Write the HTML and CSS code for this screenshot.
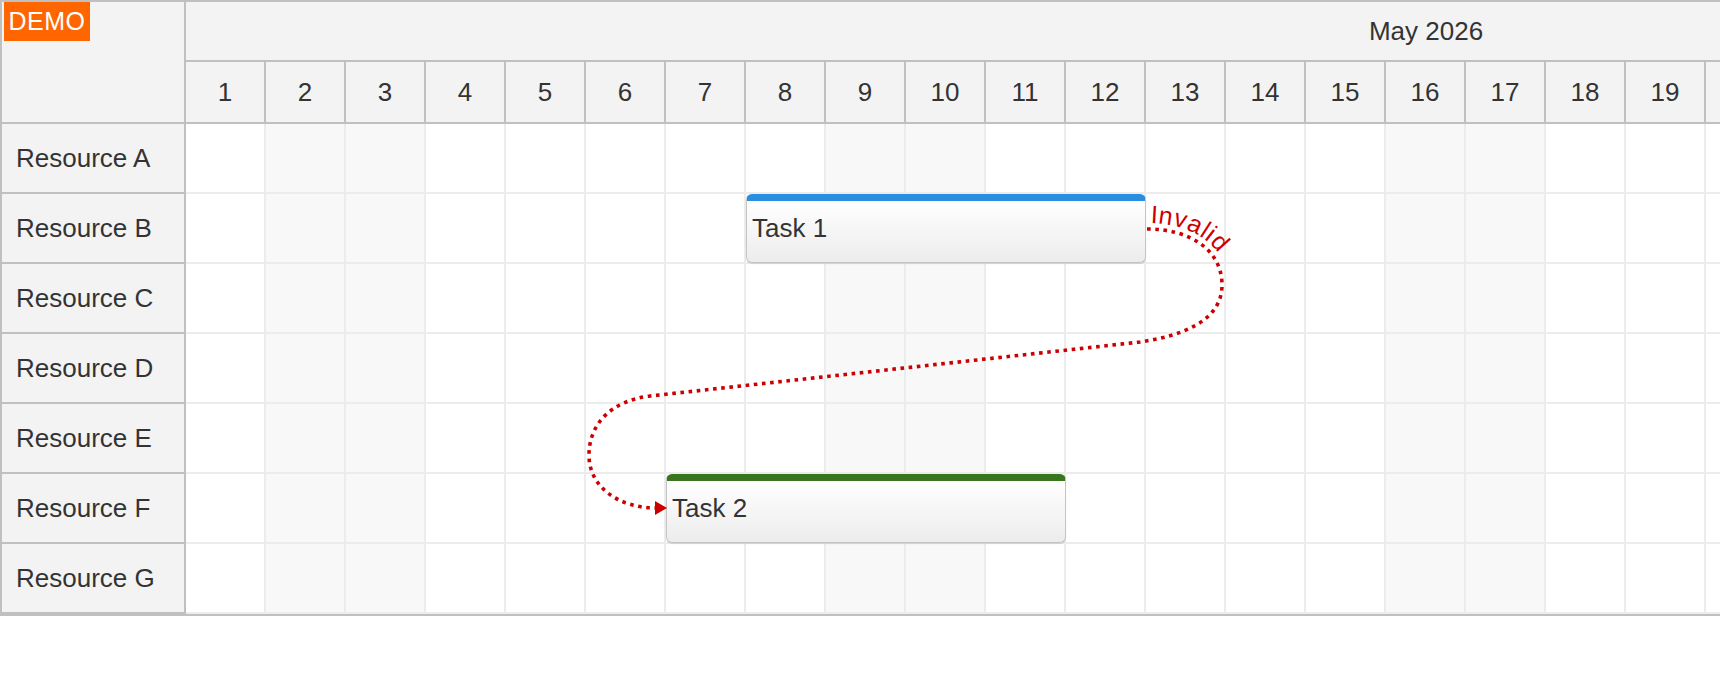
FILE: index.html
```html
<!DOCTYPE html>
<html>
<head>
<meta charset="utf-8">
<link rel="stylesheet" href="styles.css">
</head>
<body>
<div class="scheduler">
  <div class="left">
    <div class="corner"><span class="demo">DEMO</span></div>
    <div class="res">Resource A</div>
    <div class="res">Resource B</div>
    <div class="res">Resource C</div>
    <div class="res">Resource D</div>
    <div class="res">Resource E</div>
    <div class="res">Resource F</div>
    <div class="res">Resource G</div>
  </div>
  <div class="timeline">
    <div class="month">May 2026</div>
    <div class="days">
      <div>1</div><div>2</div><div>3</div><div>4</div><div>5</div><div>6</div><div>7</div><div>8</div><div>9</div><div>10</div>
      <div>11</div><div>12</div><div>13</div><div>14</div><div>15</div><div>16</div><div>17</div><div>18</div><div>19</div><div>20</div>
      <div>21</div><div>22</div><div>23</div><div>24</div><div>25</div><div>26</div><div>27</div><div>28</div><div>29</div><div>30</div><div>31</div>
    </div>
    <div class="grid">
      <div class="row"><i></i><i class="w"></i><i class="w"></i><i></i><i></i><i></i><i></i><i></i><i class="w"></i><i class="w"></i><i></i><i></i><i></i><i></i><i></i><i class="w"></i><i class="w"></i><i></i><i></i><i></i><i></i><i></i><i class="w"></i><i class="w"></i><i></i><i></i><i></i><i></i><i></i><i class="w"></i><i class="w"></i></div>
      <div class="row"><i></i><i class="w"></i><i class="w"></i><i></i><i></i><i></i><i></i><i></i><i class="w"></i><i class="w"></i><i></i><i></i><i></i><i></i><i></i><i class="w"></i><i class="w"></i><i></i><i></i><i></i><i></i><i></i><i class="w"></i><i class="w"></i><i></i><i></i><i></i><i></i><i></i><i class="w"></i><i class="w"></i></div>
      <div class="row"><i></i><i class="w"></i><i class="w"></i><i></i><i></i><i></i><i></i><i></i><i class="w"></i><i class="w"></i><i></i><i></i><i></i><i></i><i></i><i class="w"></i><i class="w"></i><i></i><i></i><i></i><i></i><i></i><i class="w"></i><i class="w"></i><i></i><i></i><i></i><i></i><i></i><i class="w"></i><i class="w"></i></div>
      <div class="row"><i></i><i class="w"></i><i class="w"></i><i></i><i></i><i></i><i></i><i></i><i class="w"></i><i class="w"></i><i></i><i></i><i></i><i></i><i></i><i class="w"></i><i class="w"></i><i></i><i></i><i></i><i></i><i></i><i class="w"></i><i class="w"></i><i></i><i></i><i></i><i></i><i></i><i class="w"></i><i class="w"></i></div>
      <div class="row"><i></i><i class="w"></i><i class="w"></i><i></i><i></i><i></i><i></i><i></i><i class="w"></i><i class="w"></i><i></i><i></i><i></i><i></i><i></i><i class="w"></i><i class="w"></i><i></i><i></i><i></i><i></i><i></i><i class="w"></i><i class="w"></i><i></i><i></i><i></i><i></i><i></i><i class="w"></i><i class="w"></i></div>
      <div class="row"><i></i><i class="w"></i><i class="w"></i><i></i><i></i><i></i><i></i><i></i><i class="w"></i><i class="w"></i><i></i><i></i><i></i><i></i><i></i><i class="w"></i><i class="w"></i><i></i><i></i><i></i><i></i><i></i><i class="w"></i><i class="w"></i><i></i><i></i><i></i><i></i><i></i><i class="w"></i><i class="w"></i></div>
      <div class="row"><i></i><i class="w"></i><i class="w"></i><i></i><i></i><i></i><i></i><i></i><i class="w"></i><i class="w"></i><i></i><i></i><i></i><i></i><i></i><i class="w"></i><i class="w"></i><i></i><i></i><i></i><i></i><i></i><i class="w"></i><i class="w"></i><i></i><i></i><i></i><i></i><i></i><i class="w"></i><i class="w"></i></div>
      <div class="event blue" style="left:560px; top:70px; width:400px;">Task 1</div>
      <div class="event green" style="left:480px; top:350px; width:400px;">Task 2</div>
    </div>
  </div>
  <svg class="links" width="1720" height="680" viewBox="0 0 1720 680">
    <path id="link1" class="link" d="M 1147 229 C 1190 229, 1222 250, 1222 285 C 1222 322, 1180 336, 1140 342 L 650 396 C 610 401, 589 425, 589 455 C 589 488, 620 508, 656 508"/>
    <polygon class="arrow" points="667,508 655,501 655,515"/>
    <text class="link-label"><textPath href="#link1" startOffset="3"><tspan dy="-6">Invalid</tspan></textPath></text>
  </svg>
</div>
</body>
</html>
```
FILE: styles.css
```css
* { box-sizing: border-box; }
body {
  margin: 0;
  font-family: "Liberation Sans", Arial, sans-serif;
  color: #333;
  background: #fff;
}
.scheduler {
  position: relative;
  display: flex;
  width: 1720px;
  border: 2px solid #c0c0c0;
  border-right: none;
  overflow: hidden;
}
.left {
  flex: none;
  width: 184px;
  background: #f3f3f3;
  border-right: 2px solid #c0c0c0;
}
.corner {
  height: 122px;
  border-bottom: 2px solid #c0c0c0;
  padding-left: 2px;
}
.demo {
  display: inline-block;
  vertical-align: top;
  width: 86px;
  height: 39px;
  line-height: 39px;
  background: #ff6600;
  color: #fff;
  font-size: 25px;
  letter-spacing: 0.5px;
  text-align: center;
}
.res {
  height: 70px;
  border-bottom: 2px solid #c0c0c0;
  display: flex;
  align-items: center;
  padding-left: 14px;
  font-size: 26px;
}
.timeline {
  flex: none;
  width: 2480px;
}
.month {
  height: 60px;
  border-bottom: 2px solid #c0c0c0;
  background: #f3f3f3;
  display: flex;
  align-items: center;
  justify-content: center;
  font-size: 26px;
}
.days {
  display: flex;
  height: 62px;
  border-bottom: 2px solid #c0c0c0;
  background: #f3f3f3;
}
.days > div {
  flex: none;
  width: 80px;
  border-right: 2px solid #c0c0c0;
  display: flex;
  align-items: center;
  justify-content: center;
  font-size: 26px;
}
.grid { position: relative; }
.row {
  display: flex;
  height: 70px;
  border-bottom: 2px solid #ececec;
}
.row > i {
  flex: none;
  width: 80px;
  border-right: 2px solid #ececec;
  background: #fff;
}
.row > i.w { background: #f8f8f8; }
.event {
  position: absolute;
  height: 69px;
  border: 1px solid #c4c4c4;
  border-top: 7px solid #2a8ee0;
  border-radius: 6px;
  background: linear-gradient(#ffffff, #ececec);
  box-shadow: 0 1px 1px rgba(0, 0, 0, 0.12);
  display: flex;
  align-items: center;
  padding: 0 0 7px 5px;
  font-size: 26px;
  color: #333;
  white-space: nowrap;
}
.event.blue { border-top-color: #2a8ee0; }
.event.green { border-top-color: #38761d; }
.links {
  position: absolute;
  left: -2px;
  top: -2px;
  pointer-events: none;
  overflow: visible;
}
.link {
  fill: none;
  stroke: #cc0000;
  stroke-width: 3.6;
  stroke-dasharray: 3.6 4.6;
}
.arrow { fill: #cc0000; }
.link-label {
  fill: #cc0000;
  font-family: "Liberation Sans", Arial, sans-serif;
  font-size: 25px;
}
```
